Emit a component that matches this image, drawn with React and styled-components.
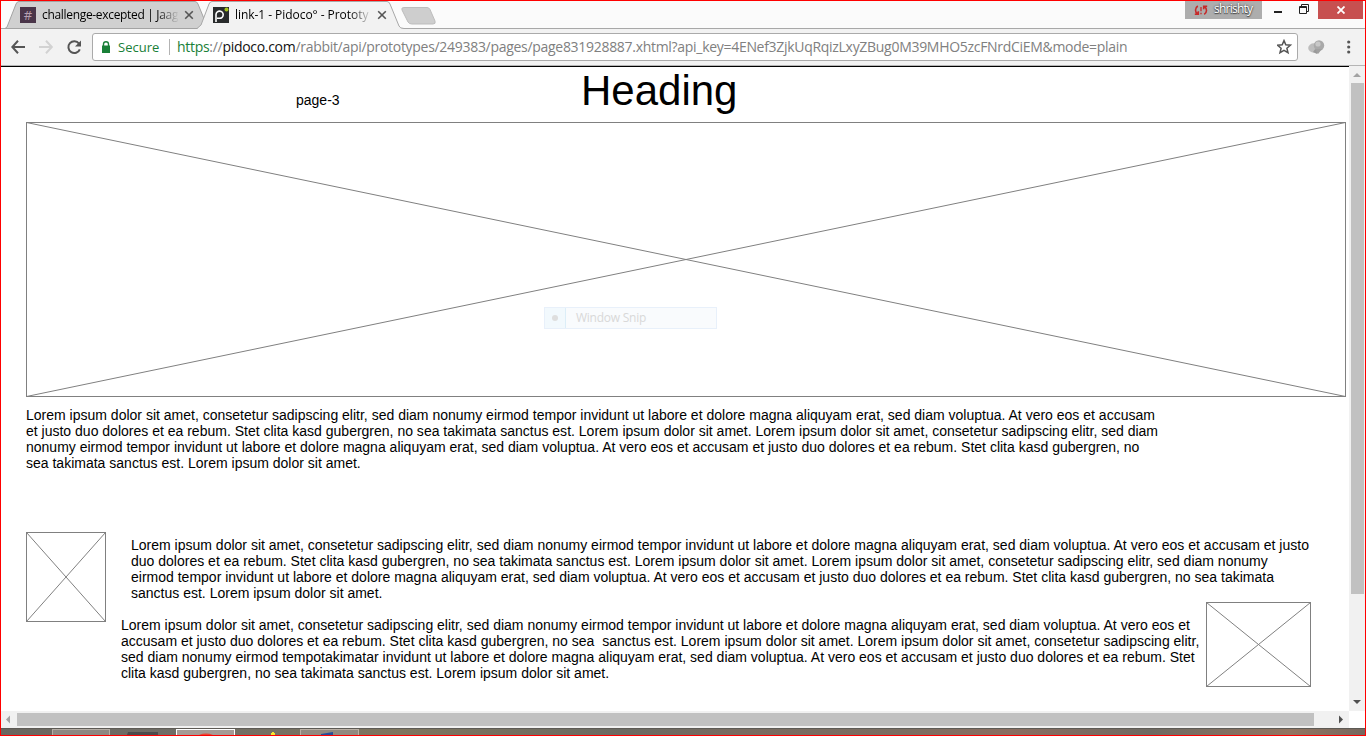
import React from "react";
import styled, { createGlobalStyle } from "styled-components";

const Global = createGlobalStyle`
  * { box-sizing: border-box; }
  html, body { margin: 0; padding: 0; overflow: hidden; }
`;

const UI = `"Open Sans", "Noto Sans", sans-serif`;

const Frame = styled.div`
  position: relative;
  width: 1366px;
  height: 736px;
  display: flex;
  flex-direction: column;
  border: 1px solid #f00;
  background: #fff;
  overflow: hidden;
  font-family: "Liberation Sans", Arial, sans-serif;
  color: #000;
`;

const TabStrip = styled.header`
  display: flex;
  height: 28px;
  flex: none;
  background: #fbfbfb;
  box-shadow: inset 0 -1px #a8a8a8;
`;

const Tab = styled.div`
  position: relative;
  z-index: ${(p) => (p.$active ? 2 : 1)};
  display: flex;
  align-items: center;
  width: ${(p) => p.$width}px;
  height: 28px;
  margin-left: ${(p) => p.$left}px;
  padding-left: ${(p) => p.$pad}px;
`;

const TabShape = styled.svg`
  position: absolute;
  inset: 0;
  z-index: -1;
  width: 100%;
  height: 28px;
`;

const TabTitle = styled.span`
  width: 136px;
  margin-left: 6px;
  overflow: hidden;
  white-space: nowrap;
  font: 12px/20px ${UI};
  letter-spacing: ${(p) => p.$spacing}px;
  mask-image: linear-gradient(to right, #000 115px, transparent 137px);
`;

const Glyph = styled.svg`
  display: block;
  flex: none;
  margin-left: ${(p) => p.$left || 0}px;
`;

const HashIcon = styled.span`
  width: 16px;
  height: 16px;
  flex: none;
  background: #4a3549;
  color: #b7a0b2;
  font: 13px/16px ${UI};
  text-align: center;
`;

const NewTab = styled.svg`
  margin: 6px 0 0 -9px;
`;

const WindowControls = styled.div`
  display: flex;
  align-items: flex-start;
  margin-left: auto;
  margin-right: 2px;
`;

const Profile = styled.div`
  display: flex;
  align-items: center;
  width: 77px;
  height: 18px;
  padding-left: 9px;
  background: #adadad;
  color: #fff;
  font: 12px/16px ${UI};
  letter-spacing: -0.75px;
  text-shadow: 0 0 2px #333, 0 1px 1px #444;
`;

const ProfileName = styled.span`
  margin: -2px 0 0 6px;
`;

const CloseWindow = styled.div`
  display: flex;
  justify-content: center;
  align-items: center;
  width: 45px;
  height: 18px;
  margin-left: 9px;
  background: #c75050;
`;

const Toolbar = styled.div`
  display: flex;
  align-items: center;
  flex: none;
  height: 37px;
  padding-left: 8px;
  background: #f2f2f2;
  border-bottom: 1px solid #b5b5b5;
`;

const AddressBar = styled.div`
  display: flex;
  align-items: center;
  width: 1206px;
  height: 28px;
  margin-left: 10px;
  padding-left: 9px;
  border: 1px solid #aaa;
  border-radius: 3px;
  background: #fff;
  font: 14px/20px ${UI};
  white-space: nowrap;
`;

const Secure = styled.span`
  width: 43px;
  margin-left: 8px;
  color: #198038;
  font-size: 13px;
`;

const Divider = styled.i`
  width: 1px;
  height: 16px;
  margin: 0 7px 0 8px;
  background: #b3b3b3;
`;

const Url = styled.span`
  flex: 1;
  color: #808080;
  letter-spacing: -0.297px;
`;

const UrlPart = styled.span`
  color: ${(p) => p.$color};
`;

const Viewport = styled.div`
  display: flex;
  flex: none;
  height: 645px;
`;

const Page = styled.main`
  width: 1348px;
  height: 645px;
  padding-left: 25px;
  border-top: 1px solid #000;
`;

const PageHeader = styled.div`
  display: flex;
  height: 55px;
`;

const PageLabel = styled.span`
  width: 285px;
  margin-left: 270px;
  padding-top: 25px;
  font-size: 14px;
  line-height: 16px;
`;

const Heading = styled.h1`
  margin: 0;
  font-size: 42px;
  font-weight: 400;
  line-height: 48px;
`;

const Placeholder = styled.svg`
  display: block;
  flex: none;
`;

const Paragraph = styled.p`
  margin: ${(p) => p.$margin};
  font-size: 14px;
  line-height: 16px;
  letter-spacing: 0.003px;
`;

const Line = styled.span`
  display: block;
  width: ${(p) => p.$width}px;
  height: 16px;
  white-space: pre;
`;

const Articles = styled.section`
  display: flex;
  margin-top: 61px;
`;

const ArticleColumn = styled.div`
  display: flex;
  flex-direction: column;
  margin-left: 15px;
`;

const ArticleRow = styled.div`
  display: flex;
  margin-top: 1px;
`;

const VScroll = styled.div`
  display: flex;
  flex-direction: column;
  justify-content: space-between;
  align-items: center;
  width: 16px;
  background: #f1f1f1;
`;

const VThumb = styled.div`
  width: 13px;
  height: 511px;
  margin-bottom: 100px;
  background: #c1c1c1;
`;

const HScroll = styled.div`
  display: flex;
  align-items: center;
  flex: none;
  width: 1348px;
  height: 17px;
  background: #f1f1f1;
`;

const HThumb = styled.div`
  width: 1297px;
  height: 13px;
  margin-right: 25px;
  background: #c1c1c1;
`;

const Taskbar = styled.footer`
  display: flex;
  flex: none;
  height: 7px;
  border-top: 1px solid #5d5a55;
  background: linear-gradient(to right, #69665f, #6f6d66 180px, #7e755e 400px, #6a6a62 620px, #786b60 740px, #7a6d61 900px, #8a6d60 1010px, #6e6a62 1150px, #927460 1290px, #75685f);
`;

const TaskButton = styled.div`
  display: flex;
  justify-content: center;
  width: ${(p) => p.$width}px;
  height: 6px;
  margin-left: ${(p) => p.$left}px;
  border: solid ${(p) => p.$edge || "transparent"};
  border-width: ${(p) => (p.$edge ? "1px 1px 0" : 0)};
  background: ${(p) => p.$fill || "transparent"};
`;

const Snip = styled.div`
  position: absolute;
  left: 543px;
  top: 306px;
  display: flex;
  width: 173px;
  height: 22px;
  border: 1px solid #e8f0fa;
  background: #f9fbfd;
  color: #d8d8d8;
  font: 12px/20px ${UI};
  letter-spacing: -0.25px;
`;

const SnipMark = styled.span`
  display: flex;
  align-items: center;
  justify-content: center;
  width: 21px;
  height: 20px;
  margin-right: 10px;
  border-right: 1px solid #dceef8;
  background: #f2f9fd;
`;

const Dot = styled.i`
  width: 6px;
  height: 6px;
  border-radius: 50%;
  background: #dedede;
`;

const Cross = ({ w, h }) => (
  <Placeholder width={w} height={h} fill="none" stroke="#808080" strokeWidth="1">
    <rect x=".5" y=".5" width={w - 1} height={h - 1} />
    <path d={`M.5 .5L${w - 0.5} ${h - 0.5}M.5 ${h - 0.5}L${w - 0.5} .5`} />
  </Placeholder>
);

const CloseIcon = ({ left }) => (
  <Glyph $left={left} width="10" height="10" stroke="#555" strokeWidth="1.6">
    <path d="M1.2 1.2L8.8 8.8M8.8 1.2L1.2 8.8" />
  </Glyph>
);

const Arrow = ({ d, color, w = 16, h = 17 }) => (
  <Glyph width={w} height={h} fill={color}>
    <path d={d} />
  </Glyph>
);

const intro = [
  "Lorem ipsum dolor sit amet, consetetur sadipscing elitr, sed diam nonumy eirmod tempor invidunt ut labore et dolore magna aliquyam erat, sed diam voluptua. At vero eos et accusam",
  "et justo duo dolores et ea rebum. Stet clita kasd gubergren, no sea takimata sanctus est. Lorem ipsum dolor sit amet. Lorem ipsum dolor sit amet, consetetur sadipscing elitr, sed diam",
  "nonumy eirmod tempor invidunt ut labore et dolore magna aliquyam erat, sed diam voluptua. At vero eos et accusam et justo duo dolores et ea rebum. Stet clita kasd gubergren, no",
  "sea takimata sanctus est. Lorem ipsum dolor sit amet.",
];

const first = [
  "Lorem ipsum dolor sit amet, consetetur sadipscing elitr, sed diam nonumy eirmod tempor invidunt ut labore et dolore magna aliquyam erat, sed diam voluptua. At vero eos et accusam et justo",
  "duo dolores et ea rebum. Stet clita kasd gubergren, no sea takimata sanctus est. Lorem ipsum dolor sit amet. Lorem ipsum dolor sit amet, consetetur sadipscing elitr, sed diam nonumy",
  "eirmod tempor invidunt ut labore et dolore magna aliquyam erat, sed diam voluptua. At vero eos et accusam et justo duo dolores et ea rebum. Stet clita kasd gubergren, no sea takimata",
  "sanctus est. Lorem ipsum dolor sit amet.",
];

const second = [
  "Lorem ipsum dolor sit amet, consetetur sadipscing elitr, sed diam nonumy eirmod tempor invidunt ut labore et dolore magna aliquyam erat, sed diam voluptua. At vero eos et",
  "accusam et justo duo dolores et ea rebum. Stet clita kasd gubergren, no sea  sanctus est. Lorem ipsum dolor sit amet. Lorem ipsum dolor sit amet, consetetur sadipscing elitr,",
  "sed diam nonumy eirmod tempotakimatar invidunt ut labore et dolore magna aliquyam erat, sed diam voluptua. At vero eos et accusam et justo duo dolores et ea rebum. Stet",
  "clita kasd gubergren, no sea takimata sanctus est. Lorem ipsum dolor sit amet.",
];

const Text = ({ lines, width, margin }) => (
  <Paragraph $margin={margin}>
    {lines.map((line) => (
      <Line key={line} $width={width}>{line}</Line>
    ))}
  </Paragraph>
);

export default function App() {
  return (
    <Frame>
      <Global />
      <TabStrip>
        <Tab $width={205} $left={4} $pad={15}>
          <TabShape viewBox="0 0 205 28">
            <path d="M0 27.5L2 26L11 3Q12 .5 14 .5H190Q192 .5 193 3L203 27.5Z" fill="#d0d0d0" stroke="#a3a3a3" />
          </TabShape>
          <HashIcon>#</HashIcon>
          <TabTitle $spacing={-0.32}>challenge-excepted | Jaag</TabTitle>
          <CloseIcon left={6} />
        </Tab>
        <Tab $active $width={212} $left={-13} $pad={16}>
          <TabShape viewBox="0 0 212 28">
            <path d="M0 28L4 24L12 3Q13 .5 15 .5H190Q192 .5 193 3L202 25Q203 27.5 207 27.5H212V28Z" fill="#f2f2f2" />
            <path d="M0 27.5L4 24L12 3Q13 .5 15 .5H190Q192 .5 193 3L202 25Q203 27.5 207 27.5H212" fill="none" stroke="#a8a8a8" />
          </TabShape>
          <Glyph width="16" height="16">
            <path d="M0 0H16V16H0Z" fill="#292b2c" />
            <path d="M3 15V7.5A3.6 3.6 0 1 1 6.5 11.3H4" fill="none" stroke="#fff" strokeWidth="1.6" />
            <circle cx="13.5" cy="2.5" r="2" fill="#a4c51d" />
          </Glyph>
          <TabTitle $spacing={-0.05}>link-1 - Pidoco° - Prototy</TabTitle>
          <CloseIcon left={6} />
        </Tab>
        <NewTab width="38" height="18">
          <path d="M4 .5H27Q29 .5 30 2.5L35 14Q36 17 33 17H12Q9 17 8 15L2 3Q1 .5 4 .5Z" fill="#cecece" stroke="#bdbdbd" />
        </NewTab>
        <WindowControls>
          <Profile>
            <Glyph width="14" height="13" fill="none" stroke="#c62a2a" strokeWidth="1.6">
              <path d="M3.8 2C.8 4 .8 8 3.5 9.7M.8 10.3H4.3V7.2M10.2 10.4C13.2 8.5 13.2 4.5 10.5 2.8M13.2 2.2H9.7V5.3" />
              <path d="M7 3V7.3M7 8.8V10.3" strokeWidth="1.3" />
            </Glyph>
            <ProfileName>shrishty</ProfileName>
          </Profile>
          <Glyph $left={12} width="8" height="18" fill="#222"><path d="M0 10H8V12H0Z" /></Glyph>
          <Glyph $left={17} width="10" height="18" fill="none" stroke="#222">
            <path d="M2.5 5V3.5H9.5V10.5H8M.5 5.5H7.5V12.5H.5ZM.5 6.5H7.5" />
          </Glyph>
          <CloseWindow>
            <Glyph width="8" height="8" stroke="#fff" strokeWidth="1.8"><path d="M.5 .5L7.5 7.5M7.5 .5L.5 7.5" /></Glyph>
          </CloseWindow>
        </WindowControls>
      </TabStrip>

      <Toolbar>
        <Glyph $left={2} width="15" height="14" fill="none" stroke="#555" strokeWidth="2">
          <path d="M7 .8L1.3 7L7 13.2M1.3 7H14" />
        </Glyph>
        <Glyph $left={13} width="15" height="14" fill="none" stroke="#d2d2d2" strokeWidth="2">
          <path d="M7 .8L12.8 7L7 13.2M12.8 7H0" />
        </Glyph>
        <Glyph $left={13} width="15" height="15" fill="none" stroke="#555" strokeWidth="2">
          <path d="M12 3.6A5.9 5.9 0 1 0 12.8 9.3" />
          <path d="M14 .5V6.5H8Z" fill="#555" stroke="none" />
        </Glyph>
        <AddressBar>
          <Glyph width="8" height="12"><path d="M0 4.5H8V12H0Z" fill="#198038" /><path d="M1.5 5V3Q1.5 .8 4 .8T6.5 3V5" fill="none" stroke="#198038" strokeWidth="1.4" /></Glyph>
          <Secure>Secure</Secure>
          <Divider />
          <Url>
            <UrlPart $color="#198038">https</UrlPart>://<UrlPart $color="#111">pidoco.com</UrlPart>/rabbit/api/prototypes/249383/pages/page831928887.xhtml?api_key=4ENef3ZjkUqRqizLxyZBug0M39MHO5zcFNrdCiEM&amp;mode=plain
          </Url>
          <Glyph width="20" height="16" fill="none" stroke="#555" strokeWidth="1.5">
            <path d="M7 1.6L8.8 5.8L13.4 6.2L9.9 9.2L11 13.7L7 11.3L3 13.7L4.1 9.2L.6 6.2L5.2 5.8Z" />
          </Glyph>
        </AddressBar>
        <Glyph $left={10} width="17" height="15">
          <ellipse cx="6" cy="8" rx="5.8" ry="4.7" fill="#bdbdbd" />
          <path d="M5 12L8 8L12 10L9 14Z" fill="#999" />
          <circle cx="11" cy="5.5" r="5.2" fill="#a9a9a9" />
          <path d="M7 9H14L10 14Z" fill="#a0a0a0" />
          <circle cx="10" cy="4" r="2.6" fill="#c8c8c8" />
        </Glyph>
        <Glyph $left={22} width="4" height="14" fill="#555">
          <circle cx="1.7" cy="2" r="1.6" /><circle cx="1.7" cy="7" r="1.6" /><circle cx="1.7" cy="12" r="1.6" />
        </Glyph>
      </Toolbar>

      <Viewport>
        <Page>
          <PageHeader>
            <PageLabel>page-3</PageLabel>
            <Heading>Heading</Heading>
          </PageHeader>
          <Cross w={1320} h={275} />
          <Text lines={intro} width={1140} margin="10px 0 0" />
          <Articles>
            <Cross w={80} h={90} />
            <ArticleColumn>
              <Text lines={first} width={1190} margin="5px 0 0 10px" />
              <ArticleRow>
                <Text lines={second} width={1085} margin="15px 0 0" />
                <Cross w={105} h={85} />
              </ArticleRow>
            </ArticleColumn>
          </Articles>
        </Page>
        <VScroll>
          <Arrow color="#a3a3a3" d="M4 11L8 7L12 11Z" />
          <VThumb />
          <Arrow color="#505050" d="M4 6L8 10L12 6Z" />
        </VScroll>
      </Viewport>
      <HScroll>
        <Arrow color="#a3a3a3" d="M9 4.5L5 8.5L9 12.5Z" />
        <HThumb />
        <Arrow w={10} color="#505050" d="M0 4.5L4 8.5L0 12.5Z" />
      </HScroll>
      <Taskbar>
        <TaskButton $left={51} $width={58} $edge="#b5aea6" $fill="#8d8882" />
        <TaskButton $left={17} $width={32}><Glyph width="32" height="6"><path d="M1 3H31V6H0Z" fill="#4b4b4b" /></Glyph></TaskButton>
        <TaskButton $left={17} $width={59} $edge="#fff" $fill="#a59b95"><Glyph width="18" height="5"><ellipse cx="9" cy="8" rx="9" ry="4.5" fill="#e74736" /></Glyph></TaskButton>
        <TaskButton $left={31} $width={14}><Glyph width="14" height="6"><path d="M6 3H8V4H9V6H5V4H6Z" fill="#f7e52d" /></Glyph></TaskButton>
        <TaskButton $left={20} $width={59} $edge="#bbb1a6" $fill="#918a80"><Glyph $left={-6} width="12" height="5"><path d="M0 5V4L12 2V5Z" fill="#254f9a" /></Glyph></TaskButton>
      </Taskbar>

      <Snip>
        <SnipMark><Dot /></SnipMark>
        Window Snip
      </Snip>
    </Frame>
  );
}
